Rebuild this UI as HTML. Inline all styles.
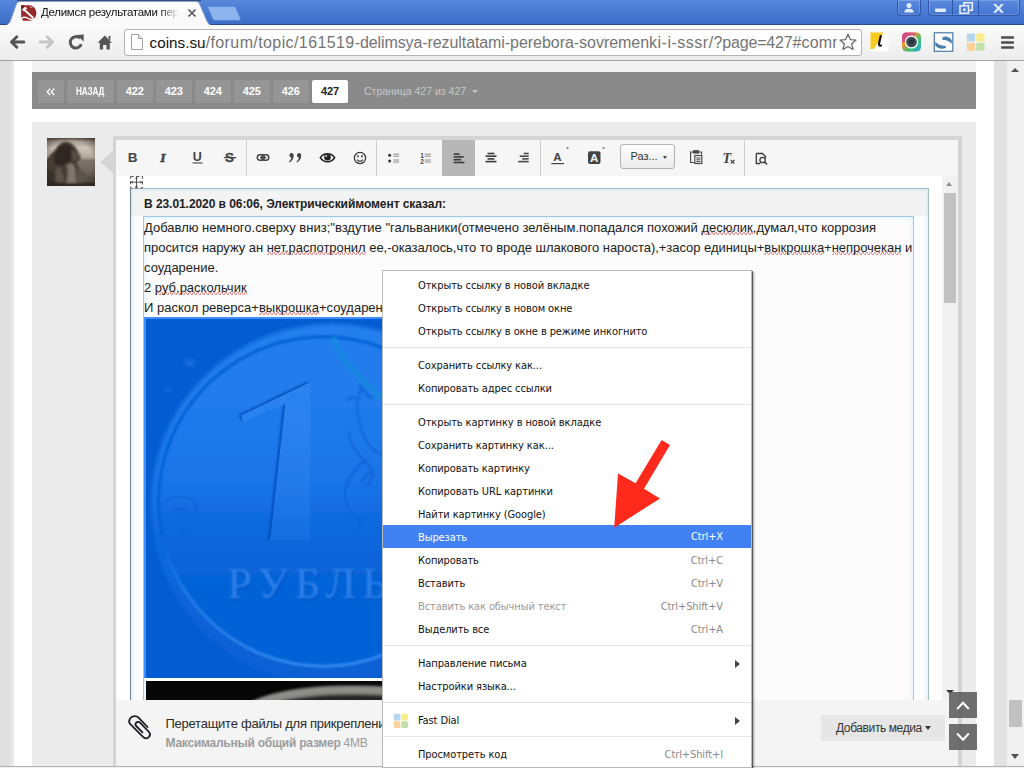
<!DOCTYPE html>
<html lang="ru">
<head>
<meta charset="utf-8">
<title>Делимся результатами перебора</title>
<style>
*{box-sizing:border-box;margin:0;padding:0}
html,body{width:1024px;height:768px;overflow:hidden;background:#fff}
body{position:relative;font-family:"Liberation Sans",sans-serif;color:#222}
.abs{position:absolute}
/* ---------- browser chrome ---------- */
#titlebar{left:0;top:0;width:1024px;height:25px;background:linear-gradient(#5888dc,#4a7bd2 45%,#3f70c9 90%,#3c6cc5);border-bottom:1px solid #2b4b86}
#topline{left:17px;top:0;width:184px;height:1px;background:#33507f}
#toolbar{left:0;top:25px;width:1024px;height:36px;background:linear-gradient(#fbfbfb,#ececec);border-bottom:1px solid #a3a3a3}
#tabtext{left:41px;top:5px;font-size:11.500px;letter-spacing:-.28px;line-height:15px;color:#111;white-space:nowrap;width:139px;overflow:hidden;-webkit-mask-image:linear-gradient(90deg,#000 0,#000 119px,transparent 138px);mask-image:linear-gradient(90deg,#000 0,#000 119px,transparent 138px)}
#urlbox{left:124px;top:29px;width:738px;height:27px;background:#fff;border:1px solid #b4b4b4;border-radius:3px}
#urltext{left:149.500px;top:32px;font-size:16px;line-height:21px;white-space:nowrap;color:#747474;width:687.500px;overflow:hidden}
#urltext b{font-weight:normal;color:#111;font-size:15.200px;letter-spacing:.05px}
#urltext i{font-style:normal}

/* chrome extras */
.wbtn{position:absolute;top:0;height:16px;border:1px solid #2f56a8;border-top:none;background:linear-gradient(#5a8ade,#4475d0);box-shadow:inset 0 0 0 1px rgba(255,255,255,.18)}
/* ---------- page ---------- */
#pg-left{left:0;top:61px;width:13.500px;height:706px;background:linear-gradient(90deg,#e0e0e0 0,#e0e0e0 10.500px,#e9e9e9 11px,#e9e9e9 13.500px)}
#pg-band{left:32px;top:61px;width:944px;height:11px;background:#f3f3f3}
#pagbar{left:32px;top:72px;width:944px;height:36.500px;background:#8a8a8a}
.pb{position:absolute;top:8px;height:22.500px;width:35.500px;background:#959595;letter-spacing:-.2px;border-radius:2px;color:#fff;font-size:11px;font-weight:bold;line-height:22px;text-align:center}
#block{left:32px;top:122px;width:944px;height:646px;background:#ebebeb}
#pg-rgray{left:994px;top:61px;width:13px;height:706px;background:#e2e2e2}
#vscroll{left:1007px;top:61px;width:17px;height:706px;background:#f1f1f1}
#bottomline{left:0;top:766px;width:1024px;height:1px;background:#b2b2b2}
#bottomwhite{left:0;top:767px;width:1024px;height:1px;background:#f2f2f2}
/* ---------- editor ---------- */
#edframe{left:113px;top:136px;width:849px;height:640px;background:#d4d4d4}
#edtool{left:116px;top:140px;width:842px;height:36px;background:#f6f6f6}
#edbody{left:116px;top:176px;width:826px;height:524px;background:#fff}
#edscroll{left:942px;top:176px;width:16px;height:524px;background:#f1f1f1}
#attach{left:116px;top:700px;width:842px;height:66px;background:#f4f4f4}
.tsep{position:absolute;top:140px;width:1px;height:36px;background:#cfcfcf}
#quote{left:130px;top:188px;width:799px;height:520px;background:#fbfcfd;border:1px solid #a3bccd;border-left-color:#6d8190;box-shadow:inset 0 0 5px #cfe5f5}
#qhbg{left:131px;top:189px;width:797px;height:27px;background:#f3f3f3;box-shadow:inset 0 2px 3px -1px #d6e9f7,inset 2px 0 3px -1px #d6e9f7,inset -2px 0 3px -1px #d6e9f7}
#qhead{left:144px;top:196px;font-size:12px;letter-spacing:-.06px;font-weight:bold;line-height:16px;color:#222;white-space:nowrap}
#qinner{left:143px;top:216px;width:771px;height:500px;background:#fcfcfc;border:1px solid #9cc9e6;box-shadow:inset 0 0 5px #d6ecfa}
.tl{position:absolute;left:144px;font-size:13px;line-height:20px;color:#222;white-space:nowrap}
.sp{background:radial-gradient(circle at 1px 2.500px,rgba(224,64,64,.55) .6px,transparent 1px) 0 100%/4px 3px repeat-x,radial-gradient(circle at 3px .5px,rgba(224,64,64,.55) .6px,transparent 1px) 0 100%/4px 3px repeat-x,radial-gradient(circle at 2px 1.500px,rgba(224,64,64,.55) .6px,transparent 1px) 0 100%/2px 3px repeat-x}
/* ---------- context menu ---------- */
#menu{z-index:5;left:382px;top:270px;width:370px;height:498px;background:#fff;border:1px solid #bababa;box-shadow:1px 1px 0 rgba(60,60,60,.75),2px 2px 2px rgba(0,0,0,.35)}
.mi{position:absolute;left:0;width:368px;height:23px;font-family:"DejaVu Sans Condensed","Liberation Sans",sans-serif;font-size:11px;letter-spacing:-.1px;line-height:23px;color:#111;padding-left:35px;white-space:nowrap}
.mi span{position:absolute;right:28px;top:0;color:#8a8a8a}
.mi.dis{color:#9a9a9a}
.mi em{position:absolute;left:352px;top:7.500px;width:0;height:0;border:4px solid transparent;border-left:5px solid #444;border-right:none}
.mi.hl{background:#4281f4;color:#fff}
.mi.hl span{color:#fff}
.ms{position:absolute;left:0;width:368px;height:1px;background:#e3e3e3}
</style>
</head>
<body>
<!-- page background pieces -->
<div class="abs" id="pg-left"></div>
<div class="abs" id="pg-band"></div>
<div class="abs" id="pagbar">
  <div class="pb" style="left:6px;width:26px"></div>
  <svg class="abs" style="left:14px;top:16px" width="10" height="8" viewBox="0 0 10 8"><path d="M4.300 .6 L1.200 3.800 L4.300 7 M8.300 .6 L5.200 3.800 L8.300 7" fill="none" stroke="#fff" stroke-width="1.300"/></svg>
  <div class="pb" style="left:35px;width:47px;font-size:10.500px;line-height:23px"><span style="display:inline-block;transform:scaleX(.78)">НАЗАД</span></div>
  <div class="pb" style="left:85px">422</div>
  <div class="pb" style="left:124px">423</div>
  <div class="pb" style="left:163px">424</div>
  <div class="pb" style="left:202px">425</div>
  <div class="pb" style="left:241px">426</div>
  <div class="pb" style="left:280px;width:36px;background:#fff;color:#222">427</div>
  <div class="abs" style="left:332px;top:8px;font-size:10.500px;line-height:22px;color:#c6c6c6;white-space:nowrap">Страница 427 из 427</div>
  <div class="abs" style="left:440px;top:17.500px;width:0;height:0;border:3px solid transparent;border-top:3.500px solid #c6c6c6"></div>
</div>
<div class="abs" id="block"></div>
<div class="abs" id="pg-rgray"></div>
<div class="abs" id="vscroll"></div>

<!-- avatar -->
<svg class="abs" style="left:47px;top:138px" width="48" height="48" viewBox="0 0 48 48">
  <defs>
    <linearGradient id="sky" x1="0" y1="0" x2="0" y2="1"><stop offset="0" stop-color="#5a4f47"/><stop offset=".07" stop-color="#a99e92"/><stop offset=".2" stop-color="#cdc3b7"/><stop offset=".4" stop-color="#b3a99c"/><stop offset=".47" stop-color="#7d736a"/><stop offset=".8" stop-color="#675e56"/><stop offset="1" stop-color="#3a3430"/></linearGradient>
    <radialGradient id="vig" cx=".5" cy=".5" r=".75"><stop offset=".6" stop-color="#2a2420" stop-opacity="0"/><stop offset="1" stop-color="#2a2420" stop-opacity=".7"/></radialGradient>
    <filter id="ab" x="-20%" y="-20%" width="140%" height="140%"><feGaussianBlur stdDeviation="1.100"/></filter>
    <clipPath id="ac"><rect x="0" y="0" width="48" height="48"/></clipPath>
  </defs>
  <rect width="48" height="48" fill="url(#sky)"/>
  <g clip-path="url(#ac)">
    <g filter="url(#ab)">
      <path d="M-2 24 C1 19 4 15 8 12 C11 7 15 3.500 19 3.500 C25 4 30 10 32 16 C34.500 19 34 22 30.500 23 C29.500 25 30 27 32 30 C36 35 44 40 50 44 L50 50 L-2 50 Z" fill="#463c35"/>
      <path d="M12 9 C16 5 21 5 24 9 C27 13 27 18 24 22 C21 26 15 28 10 27 C5 25 7 14 12 9 Z" fill="#2f2823"/>
      <path d="M24 12 C28 13 31 16 32 19 C30 21 27 22 25 22 Z" fill="#5a4f46"/>
      <path d="M20 27 C23 24.500 26 25 27.500 28 C29 33 28.500 39 29.500 46 L19 46 C21 40 21 33 20 27 Z" fill="#7f746a"/>
      <path d="M10 28 C14 30 17 36 17 47 L6 47 C8 40 9 34 10 28 Z" fill="#5d5249"/>
      <path d="M2 31 C6 31 9 35 9 48 L-2 48 L-2 33 Z" fill="#302924" opacity=".56"/>
      <path d="M30 30 C36 34 42 38 50 41 L50 50 L30 50 Z" fill="#5c534b"/>
      <path d="M-2 43 C10 45 30 46 50 44 L50 50 L-2 50 Z" fill="#2b2521" opacity=".85"/>
    </g>
    <rect width="48" height="48" fill="url(#vig)"/>
  </g>
</svg>
<svg class="abs" style="left:100px;top:150px" width="14" height="24" viewBox="0 0 14 24"><path d="M13.500 0.500 L0.500 12 L13.500 23.500 Z" fill="#d4d4d4"/></svg>
<!-- editor -->
<div class="abs" id="edframe"></div>
<div class="abs" id="edtool"></div>
<!-- editor toolbar icons -->
<div class="abs" style="left:442px;top:140px;width:33px;height:36px;background:#b7b7b7"></div>
<div class="tsep" style="left:246px"></div><div class="tsep" style="left:376px"></div><div class="tsep" style="left:540px"></div><div class="tsep" style="left:744px"></div>
<svg class="abs" style="left:116px;top:140px" width="842" height="36" viewBox="116 140 842 36" font-family="Liberation Sans, sans-serif">
  <g fill="#444">
    <text x="127.800" y="162" font-size="13.500" font-weight="bold">B</text>
    <text x="160.300" y="162.300" font-size="13.500" font-weight="bold" font-style="italic" font-family="Liberation Serif, serif" stroke="#444" stroke-width=".6">I</text>
    <text x="192.800" y="161.200" font-size="12.500" font-weight="bold">U</text>
    <rect x="192.500" y="162.400" width="10" height="1.100"/>
    <text x="225" y="162.200" font-size="13.500" font-weight="bold" stroke="#444" stroke-width=".35">S</text>
    <rect x="223.800" y="157" width="12.500" height="1.200"/>
  </g>
  <!-- link -->
  <g fill="none" stroke="#444" stroke-width="1.500">
    <rect x="257.300" y="154.800" width="7" height="5.400" rx="2.700"/>
    <rect x="261.800" y="154.800" width="7" height="5.400" rx="2.700"/>
  </g>
  <rect x="260" y="156.800" width="6.200" height="1.500" fill="#444"/>
  <!-- quote -->
  <g fill="#444">
    <path d="M291.300 153 a2.400 2.400 0 0 1 2.400 2.500 c0 3.200 -1.600 5.600 -4.300 7 l-.5 -.8 c1.500 -1.200 2.300 -2.500 2.400 -4 a2.400 2.400 0 0 1 0 -4.700 z"/>
    <path d="M298.800 153 a2.400 2.400 0 0 1 2.400 2.500 c0 3.200 -1.600 5.600 -4.300 7 l-.5 -.8 c1.500 -1.200 2.300 -2.500 2.400 -4 a2.400 2.400 0 0 1 0 -4.700 z"/>
  </g>
  <!-- eye -->
  <path d="M320.300 157.600 C323.500 152.300 331.500 152.300 334.700 157.600 C331.500 163 323.500 163 320.300 157.600 Z" fill="none" stroke="#222" stroke-width="1.500"/>
  <circle cx="327.500" cy="157.300" r="3.300" fill="#222"/>
  <circle cx="326.300" cy="156" r=".9" fill="#ddd"/>
  <!-- smiley -->
  <circle cx="360" cy="158" r="5.600" fill="none" stroke="#333" stroke-width="1.200"/>
  <circle cx="358" cy="156.300" r=".95" fill="#333"/><circle cx="362" cy="156.300" r=".95" fill="#333"/>
  <path d="M357.200 159.600 C358.500 161.800 361.500 161.800 362.800 159.600" fill="none" stroke="#333" stroke-width="1.100"/>
  <!-- ul -->
  <circle cx="389.600" cy="155.200" r="1.500" fill="#333"/><circle cx="389.600" cy="161" r="1.500" fill="#333"/>
  <g fill="#8c8c8c"><rect x="393.300" y="153.700" width="5.800" height="1"/><rect x="393.300" y="155.700" width="5.800" height="1"/><rect x="393.300" y="159.500" width="5.800" height="1"/><rect x="393.300" y="161.500" width="5.800" height="1"/></g>
  <!-- ol -->
  <g fill="#444" font-size="6.500" font-weight="bold"><text x="420.300" y="157.800">1</text><text x="420.300" y="164">2</text></g>
  <g fill="#8c8c8c"><rect x="424.700" y="153.700" width="6.200" height="1"/><rect x="424.700" y="155.700" width="6.200" height="1"/><rect x="424.700" y="159.500" width="6.200" height="1"/><rect x="424.700" y="161.500" width="6.200" height="1"/></g>
  <!-- align left -->
  <g fill="#3a3a3a"><rect x="453.700" y="153.300" width="6" height="1.600"/><rect x="453.700" y="156.100" width="10" height="1.600"/><rect x="453.700" y="158.900" width="7.500" height="1.600"/><rect x="453.700" y="161.700" width="10.700" height="1.600"/></g>
  <!-- align center -->
  <g fill="#3a3a3a"><rect x="487.500" y="152.700" width="7" height="1.600"/><rect x="485.500" y="155.400" width="11" height="1.600"/><rect x="487.500" y="158.100" width="7" height="1.600"/><rect x="485.500" y="160.800" width="11" height="1.600"/></g>
  <!-- align right -->
  <g fill="#4a4a4a"><rect x="523.700" y="152.700" width="5" height="1.600"/><rect x="519.700" y="155.400" width="9" height="1.600"/><rect x="522.200" y="158.100" width="6.500" height="1.600"/><rect x="518.200" y="160.800" width="10.500" height="1.600"/></g>
  <!-- A color -->
  <text x="553.300" y="161.200" font-size="11.500" font-weight="bold" fill="#444">A</text>
  <rect x="551.300" y="163" width="12.700" height="1.200" fill="#444"/>
  <path d="M566 147.500 h3 l-1.500 1.600 z" fill="#444"/>
  <!-- BG color -->
  <rect x="588" y="151.300" width="12.500" height="12.700" rx="2" fill="#444"/>
  <text x="590" y="162" font-size="11.500" font-weight="bold" fill="#f4f4f4">A</text>
  <path d="M602 147.500 h3 l-1.500 1.600 z" fill="#444"/>
  <!-- paste -->
  <g fill="none" stroke="#4a4a4a" stroke-width="1.200">
    <path d="M693.500 152 h-2.900 v10.500 h3.500"/><path d="M698.500 152 h3 v2.500"/>
    <rect x="693.500" y="150.800" width="5" height="2.200" fill="#4a4a4a"/>
    <rect x="694.800" y="155.500" width="7" height="8"/>
  </g>
  <g fill="#4a4a4a"><rect x="696.300" y="157.500" width="4" height="1"/><rect x="696.300" y="159.300" width="4" height="1"/><rect x="696.300" y="161.100" width="4" height="1"/></g>
  <!-- remove format -->
  <text x="722.600" y="162.600" font-size="14" font-weight="bold" font-style="italic" font-family="Liberation Serif, serif" fill="#444">T</text>
  <path d="M730.800 160 l3.600 3.600 m0 -3.600 l-3.600 3.600" stroke="#444" stroke-width="1.300" fill="none"/>
  <!-- preview -->
  <path d="M756.300 153.500 h6.200 l3 3 v1.500 M756.300 153.500 v10 h4" fill="none" stroke="#3a3a3a" stroke-width="1.300"/>
  <circle cx="762.600" cy="160" r="2.700" fill="none" stroke="#3a3a3a" stroke-width="1.300"/>
  <path d="M764.600 162 l2.400 2.400" stroke="#3a3a3a" stroke-width="1.500"/>
</svg>
<div class="abs" style="left:620px;top:144px;width:55px;height:25px;border:1px solid #b3b3b3;border-radius:3px;background:linear-gradient(#fdfdfd,#ebebeb);font-size:11px;line-height:23px;color:#333;padding-left:9.500px">Раз...</div>
<div class="abs" style="left:663px;top:156px;width:0;height:0;border:2.500px solid transparent;border-top:3px solid #444"></div>
<div class="abs" id="edbody"></div>
<div class="abs" id="edscroll"></div>
<div class="abs" id="quote"></div>
<div class="abs" id="qhbg"></div>
<svg class="abs" style="left:129px;top:175px" width="16" height="15" viewBox="0 0 16 15">
  <rect x="1.500" y="1.500" width="12" height="11.500" fill="#fff" stroke="#555" stroke-width="1" stroke-dasharray="3.200 2.400"/>
  <path d="M7.500 2.500 V12 M2.500 7.200 H12.500" stroke="#555" stroke-width="1"/>
  <path d="M7.500 1.500 l-1.600 2 h3.200 z M7.500 13 l-1.600 -2 h3.200 z M1.600 7.200 l2 -1.600 v3.200 z M13.400 7.200 l-2 -1.600 v3.200 z" fill="#555"/>
</svg>
<div class="abs" id="qhead">В 23.01.2020 в 06:06, Электрическиймомент сказал:</div>
<div class="abs" id="qinner"></div>
<div class="tl" style="top:218px">Добавлю немного.сверху вниз;"вздутие "гальваники(отмечено зелёным.попадался похожий <span class="sp">десюлик</span>,думал,что коррозия</div>
<div class="tl" style="top:238px;letter-spacing:-.036px">просится наружу ан <span class="sp">нет.распотронил</span> ее,-оказалось,что то вроде шлакового нароста),+засор единицы+<span class="sp">выкрошка</span>+<span class="sp">непрочекан</span> и</div>
<div class="tl" style="top:258px">соударение.</div>
<div class="tl" style="top:278px">2 <span class="sp">руб.раскольчик</span></div>
<div class="tl" style="top:298px">И раскол реверса+<span class="sp">выкрошка</span>+соударение</div>
<!-- selected coin image -->
<div class="abs" style="left:144px;top:317px;width:500px;height:361px;background:#3d8fff"></div>
<svg class="abs" style="left:146px;top:319px" width="500" height="359" viewBox="146 319 500 359">
  <defs>
    <linearGradient id="cf" x1="0" y1="336" x2="0" y2="666" gradientUnits="userSpaceOnUse"><stop offset="0" stop-color="#227dec"/><stop offset=".3" stop-color="#1f7aea"/><stop offset=".46" stop-color="#1973e5"/><stop offset=".56" stop-color="#0f6ade"/><stop offset=".66" stop-color="#0864d9"/><stop offset=".8" stop-color="#0562d6"/><stop offset="1" stop-color="#0562d6"/></linearGradient>
    <linearGradient id="cf1" x1="0" y1="336" x2="0" y2="666" gradientUnits="userSpaceOnUse"><stop offset="0" stop-color="#2c85f0"/><stop offset=".3" stop-color="#2981ee"/><stop offset=".46" stop-color="#227ae9"/><stop offset=".56" stop-color="#1871e3"/><stop offset=".66" stop-color="#106adc"/><stop offset="1" stop-color="#0a65d9"/></linearGradient>
    <linearGradient id="od" x1="0" y1="324" x2="0" y2="690" gradientUnits="userSpaceOnUse"><stop offset="0" stop-color="#2580ec"/><stop offset=".42" stop-color="#1d77e7"/><stop offset=".6" stop-color="#0f69dd"/><stop offset=".8" stop-color="#0a63d7"/><stop offset="1" stop-color="#065ed3"/></linearGradient>
    <linearGradient id="gr" x1="230" y1="350" x2="300" y2="665" gradientUnits="userSpaceOnUse"><stop offset="0" stop-color="#0660d6"/><stop offset=".5" stop-color="#0660d6"/><stop offset=".68" stop-color="#1f79e6"/><stop offset="1" stop-color="#338af0"/></linearGradient>
    <filter id="bl1" x="-5%" y="-5%" width="110%" height="110%"><feGaussianBlur stdDeviation="2.200"/></filter>
    <filter id="bl2" x="-5%" y="-5%" width="110%" height="110%"><feGaussianBlur stdDeviation=".9"/></filter>
    <filter id="bl3" x="-30%" y="-30%" width="160%" height="160%"><feGaussianBlur stdDeviation="2.500"/></filter>
    <filter id="ds1" x="-20%" y="-10%" width="140%" height="120%"><feGaussianBlur in="SourceAlpha" stdDeviation="1.100" result="b"/><feOffset in="b" dx="-2" dy="-1" result="o"/><feFlood flood-color="#034fbc" flood-opacity="1"/><feComposite in2="o" operator="in" result="sh"/><feGaussianBlur in="SourceGraphic" stdDeviation=".7" result="sg"/><feMerge><feMergeNode in="sh"/><feMergeNode in="sg"/></feMerge></filter>
    <filter id="ds2" x="-10%" y="-30%" width="120%" height="160%"><feGaussianBlur in="SourceAlpha" stdDeviation=".9" result="b"/><feOffset in="b" dx="1.300" dy="1.500" result="o"/><feFlood flood-color="#0352c0" flood-opacity=".7"/><feComposite in2="o" operator="in" result="sh"/><feGaussianBlur in="SourceGraphic" stdDeviation=".8" result="sg"/><feMerge><feMergeNode in="sh"/><feMergeNode in="sg"/></feMerge></filter>
    <clipPath id="oneclip"><path d="M310.500 382 L241 415.500 L244 423.500 L285.300 404 L270 541.500 L310.500 541.500 Z"/></clipPath>
  </defs>
  <rect x="146" y="319" width="500" height="359" fill="#035cd1"/>
  <ellipse cx="190" cy="363" rx="6" ry="3.500" fill="#2a7ce4" opacity=".7" filter="url(#bl3)"/>
  <circle cx="168" cy="390" r="2.500" fill="#2a7ce4" opacity=".6" filter="url(#bl3)"/>
  <circle cx="332" cy="505" r="181" fill="url(#od)" filter="url(#bl1)"/>
  <circle cx="323.400" cy="501.500" r="164.500" fill="url(#cf)" filter="url(#bl2)"/>
  <circle cx="323.400" cy="501.500" r="164.800" fill="none" stroke="url(#gr)" stroke-width="3" filter="url(#bl2)"/>
  <!-- numeral (real text, clipped to the coin's narrower design) -->
  <g filter="url(#ds1)"><g clip-path="url(#oneclip)"><text transform="translate(198.900 0) scale(1.320 1)" x="0" y="541" font-size="230" font-weight="bold" font-family="Liberation Sans, sans-serif" fill="url(#cf1)">1</text></g></g>
  <path d="M310.500 386 V540" stroke="#0a58c8" stroke-width="1.400" opacity=".55" fill="none" filter="url(#bl2)"/><path d="M308.500 388 V539" stroke="#4596f6" stroke-width="1.200" opacity=".4" fill="none" filter="url(#bl2)"/>
  <g filter="url(#ds2)"><text x="227" y="597.500" font-size="45" font-family="Liberation Serif, serif" letter-spacing="6" fill="#2a80ea">РУБЛЬ</text></g>
  <!-- ornament -->
  <g fill="none" stroke="#0b5fd3" stroke-width="2.200" filter="url(#bl2)" opacity=".8">
    <path d="M346 401 C350 396 356 397 358 400 C360 394 360 389 361 386 C364 390 366 396 372 398"/>
    <path d="M357 402 C358 415 360 428 366 440 C371 449 378 453 386 455"/>
    <path d="M349 432 C351 445 358 455 367 463 C374 470 375 478 366 486"/>
    <path d="M368 459 C358 465 350 475 346 487 C344 498 348 508 356 516 C360 520 362 524 357 528"/>
    <path d="M362 482 C366 474 372 470 374 476"/>
    <path d="M165 506 C168 498 180 495 192 501 C197 505 197 511 196 516"/>
    <path d="M172 512 C176 508 184 508 188 512"/>
    <path d="M181 528 C183 532 185 533 187 533"/>
  </g>
  <g fill="none" stroke="#3b8df2" stroke-width="1.200" filter="url(#bl2)" opacity=".45">
    <path d="M359 403 C360 416 362 428 368 439 C373 448 380 452 387 453"/>
    <path d="M351 432 C353 445 360 454 369 462"/>
    <path d="M348 488 C346 498 350 507 358 515"/>
    <path d="M167 505 C170 499 181 497 192 503"/>
  </g>
  <path d="M332.500 337 C338 350 346 362 354 371 C364 383 374 393 387 401" fill="none" stroke="#168ae0" stroke-width="6" opacity=".8" filter="url(#bl2)"/>
</svg>
<!-- second image -->
<div class="abs" style="left:144px;top:678px;width:500px;height:3px;background:#fff"></div>
<svg class="abs" style="left:145.500px;top:681px" width="500" height="19" viewBox="145.500 681 500 19">
  <defs><filter id="bl4" x="-10%" y="-50%" width="120%" height="200%"><feGaussianBlur stdDeviation="1.500"/></filter></defs>
  <rect x="145" y="681" width="501" height="19" fill="#070606"/>
  <ellipse cx="352" cy="716" rx="108" ry="26" fill="#262523" stroke="#8e8e89" stroke-width="8" filter="url(#bl4)"/>
  <ellipse cx="352" cy="714" rx="110" ry="27" fill="none" stroke="#a6a6a0" stroke-width="1.500" opacity=".7" filter="url(#bl4)"/>
</svg>
<!-- red arrow (drawn over the menu later) -->
<div class="abs" id="attach"></div>


<svg class="abs" style="left:126px;top:712px" width="30" height="30" viewBox="126 712 30 30">
  <path d="M147.500 727 L138.300 717.400 C136.500 715.600 132.500 715.500 130.500 718 C128.600 720.500 128.800 722.500 130.300 724.200 L143.300 737.200 C145 738.900 147.500 738.900 149 737 C150.600 735 150.400 733.500 149 732 L140.300 722.900 C139 721.600 137 721.600 136 722.800 C135 724 135.200 725 136.200 726 L142.500 732.300" fill="none" stroke="#1c1c24" stroke-width="1.800" stroke-linecap="round" stroke-linejoin="round"/>
</svg>
<div class="abs" style="left:165.500px;top:714px;font-size:13px;letter-spacing:-.25px;line-height:20px;color:#2a2a2a;white-space:nowrap;width:217px;overflow:hidden">Перетащите файлы для прикрепления</div>
<div class="abs" style="left:165.500px;top:735px;font-size:12px;letter-spacing:-.24px;line-height:16px;color:#9c9c9c;font-weight:bold;white-space:nowrap">Максимальный общий размер <span style="font-weight:normal">4MB</span></div>
<div class="abs" style="left:821px;top:714.500px;width:124px;height:26px;background:#e6e6e6;border-radius:2px;font-size:12px;letter-spacing:-.4px;line-height:26px;color:#333;padding-left:15px;white-space:nowrap">Добавить медиа</div>
<div class="abs" style="left:924.800px;top:726px;width:0;height:0;border:3.300px solid transparent;border-top:4.200px solid #333"></div>

<!-- context menu -->
<div class="abs" id="menu">
  <div class="mi" style="top:3px">Открыть ссылку в новой вкладке</div>
  <div class="mi" style="top:26px">Открыть ссылку в новом окне</div>
  <div class="mi" style="top:49px">Открыть ссылку в окне в режиме инкогнито</div>
  <div class="ms" style="top:76px"></div>
  <div class="mi" style="top:83px">Сохранить ссылку как...</div>
  <div class="mi" style="top:106px">Копировать адрес ссылки</div>
  <div class="ms" style="top:133px"></div>
  <div class="mi" style="top:140px">Открыть картинку в новой вкладке</div>
  <div class="mi" style="top:163px">Сохранить картинку как...</div>
  <div class="mi" style="top:186px">Копировать картинку</div>
  <div class="mi" style="top:209px">Копировать URL картинки</div>
  <div class="mi" style="top:232px">Найти картинку (Google)</div>
  <div class="mi hl" style="top:254px;padding-top:1px">Вырезать<span>Ctrl+X</span></div>
  <div class="mi" style="top:278px">Копировать<span>Ctrl+C</span></div>
  <div class="mi" style="top:301px">Вставить<span>Ctrl+V</span></div>
  <div class="mi dis" style="top:324px">Вставить как обычный текст<span>Ctrl+Shift+V</span></div>
  <div class="mi" style="top:347px">Выделить все<span>Ctrl+A</span></div>
  <div class="ms" style="top:374px"></div>
  <div class="mi" style="top:381px">Направление письма<em></em></div>
  <div class="mi" style="top:404px">Настройки языка...</div>
  <div class="ms" style="top:431px"></div>
  <div class="mi" style="top:438px">Fast Dial<em></em><svg style="position:absolute;left:10px;top:4px" width="16" height="16" viewBox="0 0 16 16"><rect x=".8" y=".8" width="6.600" height="6.600" rx="1" fill="#b5d5ec"/><rect x="8.300" y=".8" width="6.600" height="6.600" rx="1" fill="#f7ee88"/><rect x=".8" y="8.300" width="6.600" height="6.600" rx="1" fill="#fbd29c"/><rect x="8.300" y="8.300" width="6.600" height="6.600" rx="1" fill="#bfe0a8"/></svg></div>
  <div class="ms" style="top:465px"></div>
  <div class="mi" style="top:472px">Просмотреть код<span>Ctrl+Shift+I</span></div>
</div>


<!-- inner scrollbar pieces -->
<div class="abs" style="left:943.500px;top:193px;width:12.500px;height:110px;background:#c1c1c1"></div>
<div class="abs" style="left:946px;top:179.200px;width:0;height:0;border:3.700px solid transparent;border-bottom:4px solid #8c8c8c"></div>
<div class="abs" style="left:945.500px;top:690px;width:0;height:0;border:4px solid transparent;border-top:4.500px solid #333"></div>
<!-- page scrollbar pieces -->
<div class="abs" style="left:1009px;top:700px;width:13px;height:27px;background:#c1c1c1"></div>
<div class="abs" style="left:1011.300px;top:64px;width:0;height:0;border:4px solid transparent;border-bottom:4.300px solid #505050"></div>
<div class="abs" style="left:1011px;top:754px;width:0;height:0;border:4.500px solid transparent;border-top:5px solid #505050"></div>
<!-- up/down buttons -->
<div class="abs" style="left:949px;top:692px;width:28px;height:26px;background:rgba(90,90,90,.86)"></div>
<div class="abs" style="left:949px;top:724px;width:28px;height:26px;background:rgba(90,90,90,.86)"></div>
<svg class="abs" style="left:949px;top:692px" width="28" height="58" viewBox="0 0 28 58"><path d="M8.200 17 L14 10.800 L19.800 17 M8.200 41.500 L14 47.700 L19.800 41.500" fill="none" stroke="#fff" stroke-width="2"/></svg>
<!-- red arrow -->
<svg class="abs" style="z-index:6;left:600px;top:430px" width="90" height="110" viewBox="600 430 90 110"><path d="M661.600 440 L670 445 L644 488.750 L660 498.400 L614.200 527.800 L618 473.600 L635.600 483.300 Z" fill="#ff2a1c"/></svg>
<!-- browser chrome -->
<div class="abs" id="titlebar"></div>
<div class="abs" id="topline"></div>
<div class="abs" id="toolbar"></div>
<svg class="abs" style="left:0;top:0" width="260" height="26" viewBox="0 0 260 26">
  <defs><linearGradient id="tg" x1="0" y1="0" x2="0" y2="1"><stop offset="0" stop-color="#ffffff"/><stop offset="1" stop-color="#f8f8f8"/></linearGradient></defs>
  <path d="M4 26 C9 25 10 22 11.5 18 L16 5 C17 2.2 18.5 1.5 21 1.5 L195 1.5 C197.5 1.5 199 2.2 200 5 L206 19 C207.5 22.5 208.5 25 213 26 Z" fill="url(#tg)" stroke="#8a9fc8" stroke-width="1"/>
  <rect x="0" y="25" width="260" height="1.2" fill="#fbfbfb"/>
  <path d="M208.500 6.500 L233.500 6.500 C235 6.500 235.600 7.200 236.100 8.400 L240.300 18.200 C240.800 19.500 240.300 20.300 239 20.300 L215.300 20.300 C213.800 20.300 213.200 19.700 212.700 18.500 L207.800 7.800 C207.500 7 207.700 6.500 208.500 6.500 Z" fill="#8db4ee" stroke="#5d8ad8" stroke-width=".8"/>
  <!-- favicon -->
  <g>
    <path d="M21.200 5.200 L29.500 5.200 C33.500 5.600 36.300 9 36.300 13 C36.300 17.500 33.500 20.300 30 20.800 L23.200 20.800 L21.200 17.800 Z" fill="#962828"/>
    <path d="M21.200 5.200 L25 5.200 L21.200 9 Z" fill="#6e1c1c"/>
    <path d="M23.200 8.800 L33.500 18.300" stroke="#fbf3f3" stroke-width="2.100" fill="none"/>
    <path d="M22 9.800 L25.200 6.600 L27.300 8.200 L24 11.600 Z" fill="#fbf3f3"/>
    <path d="M21.500 18.400 C24 16.400 26.500 17.500 28.500 18.600 C30.500 19.600 33 19.600 35.500 18.600" stroke="#fbf3f3" stroke-width="1.500" fill="none"/>
    <path d="M29.500 6.200 L31 7.800 L32.800 6.800" stroke="#fbf3f3" stroke-width=".9" fill="none" opacity=".7"/>
  </g>
  <!-- close x on tab -->
  <path d="M188.500 9.500 L195.500 16.500 M195.500 9.500 L188.500 16.500" stroke="#5a5a5a" stroke-width="1.700" fill="none"/>
</svg>
<div class="abs" id="tabtext">Делимся результатами перебора</div>
<!-- window buttons -->
<div class="wbtn" style="left:897px;width:24px;border-radius:0 0 4px 4px"></div>
<div class="wbtn" style="left:928px;width:92px;border-radius:0 0 4px 4px"></div>
<div class="abs" style="left:952px;top:0;width:1px;height:16px;background:#2f56a8"></div>
<div class="abs" style="left:978px;top:0;width:1px;height:16px;background:#2f56a8"></div>
<svg class="abs" style="left:897px;top:0" width="124" height="17" viewBox="0 0 124 17">
  <g fill="#e3ecfb">
    <circle cx="12" cy="5.600" r="2.500"/>
    <path d="M7.300 12.400 C7.300 9.800 9.300 8.800 12 8.800 C14.700 8.800 16.700 9.800 16.700 12.400 Z"/>
    <rect x="38" y="8.500" width="11" height="3.500" rx="1"/>
    <path d="M110 4 L113 4 L115.500 7 L118 4 L121 4 L117 8.300 L121 12.800 L118 12.800 L115.500 9.800 L113 12.800 L110 12.800 L114 8.300 Z" transform="translate(-14,0)"/>
  </g>
  <g fill="none" stroke="#e3ecfb" stroke-width="1.600">
    <rect x="66.800" y="2.800" width="8.500" height="7.500"/>
    <rect x="63" y="5.800" width="8.500" height="7.500" fill="#4c7dd5"/>
  </g>
  <rect x="66" y="8.500" width="2.600" height="2.400" fill="#e3ecfb"/>
</svg>
<!-- nav icons -->
<svg class="abs" style="left:0;top:26px" width="124" height="34" viewBox="0 0 124 34">
  <g fill="none" stroke-linecap="round" stroke-linejoin="round">
    <path d="M23.800 16 L12.500 16 M16.800 10.800 L11.500 16 L16.800 21.200" stroke="#555" stroke-width="3"/>
    <path d="M40.200 16 L51.500 16 M47.200 10.800 L52.500 16 L47.200 21.200" stroke="#c6c6c6" stroke-width="3"/>
    <path d="M80 12.300 A5.700 5.700 0 1 0 81.300 18.300" stroke="#555" stroke-width="3" stroke-linecap="butt"/>
  </g>
  <path d="M76.800 9 L83.800 8.600 L83.600 15.600 Z" fill="#555"/>
  <path d="M104.800 9.600 L112 16.800 L109.800 16.800 L109.800 23.500 L106.500 23.500 L106.500 19 L103.100 19 L103.100 23.500 L99.800 23.500 L99.800 16.800 L97.600 16.800 Z" fill="#555"/>
  <rect x="108.600" y="9.800" width="1.800" height="4" fill="#555"/>
</svg>
<div class="abs" id="urlbox"></div>
<svg class="abs" style="left:128px;top:32px" width="20" height="22" viewBox="0 0 20 22">
  <path d="M3.500 2.500 L10.500 2.500 L14.500 6.500 L14.500 17.500 L3.500 17.500 Z" fill="#fcfcfc" stroke="#a0a0a0" stroke-width="1"/>
  <path d="M10.500 2.500 L10.500 6.500 L14.500 6.500" fill="#e8e8e8" stroke="#a0a0a0" stroke-width="1"/>
</svg>
<div class="abs" id="urltext"><b>coins.su</b><i style="letter-spacing:.4px">/forum/topic/161519</i><i style="letter-spacing:-.09px">-delimsya-rezultatami</i><i style="letter-spacing:-.04px">-perebora-sovremen</i><i style="letter-spacing:.5px">ki-i-sssr/</i><i style="letter-spacing:-.19px">?page=427</i><i style="letter-spacing:.2px">#comment</i></div>
<svg class="abs" style="left:838px;top:32px" width="20" height="20" viewBox="0 0 20 20">
  <path d="M10 2.300 L12.300 7.600 L18 8.100 L13.700 11.900 L15 17.500 L10 14.500 L5 17.500 L6.300 11.900 L2 8.100 L7.700 7.600 Z" fill="#fff" stroke="#6a6a6a" stroke-width="1.300" stroke-linejoin="round"/>
</svg>
<!-- extension icons -->
<svg class="abs" style="left:866px;top:30px" width="158" height="26" viewBox="0 0 158 26">
  <defs>
    <linearGradient id="rb" x1="0" y1="0" x2="1" y2="1"><stop offset="0" stop-color="#d83a8a"/><stop offset=".35" stop-color="#f09a2a"/><stop offset=".65" stop-color="#3ac07a"/><stop offset="1" stop-color="#2aa8e8"/></linearGradient>
  </defs>
  <rect x="4" y="2.500" width="18.500" height="19" rx="3" fill="#fff"/>
  <path d="M4.500 2.500 L17.500 2.500 L8 19 L4.500 19 Z" fill="#f7c81e"/>
  <path d="M14.800 6 L13 13.500 C12.700 15 13.500 15.800 15 15.500" fill="none" stroke="#111" stroke-width="2.200" stroke-linecap="round"/>
  <rect x="36" y="2.500" width="19" height="19" rx="4.500" fill="url(#rb)"/>
  <path d="M36 12 L36 7 Q36 2.500 40.500 2.500 L50 2.500 L45 12 Z" fill="#c93a9a" opacity=".6"/>
  <circle cx="45.500" cy="12" r="6.600" fill="#fff"/>
  <circle cx="45.500" cy="12" r="5.300" fill="#3b4a55"/>
  <circle cx="45.500" cy="12" r="2.400" fill="#27333c"/>
  <rect x="68.300" y="2.800" width="18.500" height="18.500" fill="#fff" stroke="#4a7aa5" stroke-width="1.200"/>
  <path d="M76.500 7.200 C79.500 5.600 83.500 6.800 85.800 10.200 L85.800 13.800 C83 10.800 80 9.600 76.500 10 Z" fill="#4a80ae"/><path d="M69.300 11.500 C71.500 14.500 75 15.500 79 15.800 C80.500 16.200 80.500 17.800 79 18.300 C75 19.300 71 18.200 69.300 15.500 Z" fill="#4a80ae"/>
  <rect x="100.800" y="3.600" width="8.200" height="8" rx="1" fill="#b5d5ec"/>
  <rect x="110.300" y="3.600" width="8.200" height="8" rx="1" fill="#f7ee88"/>
  <rect x="100.800" y="12.800" width="8.200" height="8" rx="1" fill="#fbd29c"/>
  <rect x="110.300" y="12.800" width="8.200" height="8" rx="1" fill="#bfe0a8"/>
  <g fill="#4e4e4e">
    <rect x="135" y="6.200" width="13" height="2.600" rx=".8"/>
    <rect x="135" y="11.200" width="13" height="2.600" rx=".8"/>
    <rect x="135" y="16.200" width="13" height="2.600" rx=".8"/>
  </g>
</svg>

<div class="abs" id="bottomline"></div>
<div class="abs" id="bottomwhite"></div>
</body>
</html>
